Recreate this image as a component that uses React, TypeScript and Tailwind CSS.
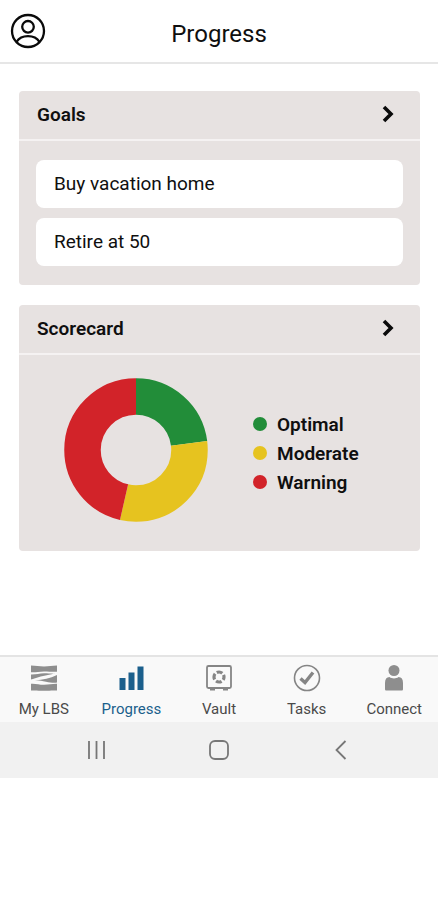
import type { ReactNode } from 'react';

interface ScoreSlice {
  label: string;
  value: number;
  stroke: string;
  dot: string;
}

const goals = ['Buy vacation home', 'Retire at 50'];

const scores: ScoreSlice[] = [
  { label: 'Optimal', value: 23, stroke: '#228d39', dot: 'bg-[#228d39]' },
  { label: 'Moderate', value: 30.6, stroke: '#e6c31f', dot: 'bg-[#e6c31f]' },
  { label: 'Warning', value: 46.4, stroke: '#d22329', dot: 'bg-[#d22329]' },
];

function ProfileIcon() {
  return (
    <svg width="36" height="36" viewBox="0 0 36 36" fill="none" stroke="#0a0a0a" strokeWidth="2.3" aria-hidden="true">
      <circle cx="18" cy="18" r="16" />
      <circle cx="18" cy="13.8" r="5.8" />
      <path d="M6.5 29C9 25 13 23.2 18 23.2s9 1.8 11.5 5.8" />
    </svg>
  );
}

function LogoIcon() {
  return (
    <svg width="28" height="28" viewBox="0 0 28 28" fill="#8e8e8e" aria-hidden="true">
      <path d="M1 1.5c5 0 8 1 13 1s8-1 13-1v6.3c-5 .3-8-.4-13-.4S6 8.5 1 8.3z" />
      <path d="M1 10.6c5 .2 8-1.300 13-1.300 4 0 8 .5 11 .3C19 11.200 12 11.900 6 14 3.500 14.800 2 15.300 1 15.500z" />
      <path d="M27 11v7.600c-4 .5-7-.2-11-.9-4-.7-7-1.300-11-1.200 8-.9 15-1.900 22-5.500z" />
      <path d="M1 19.700c5-.3 8 1 13 1s8-1 13-.9v6.700c-5-.3-8 .2-13 .2s-8-.5-13-.2z" />
    </svg>
  );
}

function BarsIcon() {
  return (
    <svg width="28" height="28" viewBox="0 0 28 28" fill="#1b5f8c" aria-hidden="true">
      <rect x="2.5" y="14" width="6" height="12" />
      <rect x="11.5" y="8.5" width="6" height="17.5" />
      <rect x="20.5" y="2.5" width="6" height="23.5" />
    </svg>
  );
}

function VaultIcon() {
  return (
    <svg width="28" height="28" viewBox="0 0 28 28" fill="none" stroke="#858585" aria-hidden="true">
      <rect x="2" y="2" width="24" height="22" rx="1.5" strokeWidth="1.8" />
      <path d="M5 25.5h5M18 25.5h5" strokeWidth="2" />
      <circle cx="14" cy="13" r="5" strokeWidth="3.2" strokeDasharray="5.854 2" strokeDashoffset="2.927" />
    </svg>
  );
}

function TasksIcon() {
  return (
    <svg width="28" height="28" viewBox="0 0 28 28" fill="none" stroke="#858585" aria-hidden="true">
      <circle cx="14" cy="14" r="12.5" strokeWidth="1.6" />
      <path d="M7.5 14.5l4.5 4L20 8.5" strokeWidth="3.4" />
    </svg>
  );
}

function PersonIcon() {
  return (
    <svg width="28" height="28" viewBox="0 0 28 28" fill="#8e8e8e" aria-hidden="true">
      <circle cx="14" cy="6.5" r="5.5" />
      <path d="M5 25v-6c0-4 1.5-6 4.5-6 1.3 1 2.7 1.4 4.5 1.4s3.2-.4 4.5-1.4c3 0 4.5 2 4.5 6v6c0 1-.5 1.5-1.5 1.5h-15C5.5 26.5 5 26 5 25z" />
    </svg>
  );
}

const tabs = [
  { label: 'My LBS', icon: <LogoIcon />, active: false },
  { label: 'Progress', icon: <BarsIcon />, active: true },
  { label: 'Vault', icon: <VaultIcon />, active: false },
  { label: 'Tasks', icon: <TasksIcon />, active: false },
  { label: 'Connect', icon: <PersonIcon />, active: false },
];

function Card({ title, children }: { title: string; children: ReactNode }) {
  return (
    <section className="rounded-[4px] bg-[#e7e2e1]">
      <button
        type="button"
        className="flex h-[50px] w-full items-center justify-between border-b-2 border-[#f5f2f2] pr-6 pl-[18px] text-left"
      >
        <h2 className="text-[19px] font-semibold">{title}</h2>
        <svg width="16" height="20" viewBox="0 0 16 20" fill="none" stroke="#0a0a0a" strokeWidth="3.6" aria-hidden="true">
          <path d="M4 2L11 9L4 16" />
        </svg>
      </button>
      {children}
    </section>
  );
}

function ScoreChart() {
  return (
    <svg width="144" height="144" viewBox="0 0 144 144" fill="none" role="img" aria-label="Scorecard">
      {scores.map((slice, i) => {
        const start = scores.slice(0, i).reduce((sum, s) => sum + s.value, 0);
        return (
          <circle
            key={slice.label}
            cx="72"
            cy="72"
            r="53.5"
            stroke={slice.stroke}
            strokeWidth="36.5"
            pathLength="100"
            strokeDasharray={`${slice.value} ${100 - slice.value}`}
            strokeDashoffset={-start}
            transform="rotate(-90 72 72)"
          />
        );
      })}
    </svg>
  );
}

export default function App() {
  return (
    <div className="min-h-screen bg-white font-['Roboto',sans-serif] text-[#0f0f0f]">
      <header className="grid h-16 grid-cols-[48px_1fr_48px] items-center border-b-2 border-[#e6e6e6]">
        <button type="button" aria-label="Profile" className="pl-[10px]">
          <ProfileIcon />
        </button>
        <h1 className="pt-[6px] text-center text-2xl">Progress</h1>
      </header>

      <main className="flex flex-col gap-5 pt-[27px] pr-[18px] pb-[104px] pl-[19px]">
        <Card title="Goals">
          <ul className="flex flex-col gap-[10px] px-[17px] py-[19px]">
            {goals.map((goal) => (
              <li key={goal} className="flex h-12 items-center rounded-lg bg-white px-[18px] text-[19px]">
                {goal}
              </li>
            ))}
          </ul>
        </Card>

        <Card title="Scorecard">
          <div className="flex items-center gap-[45px] pt-[23px] pb-[29px] pl-[45px]">
            <ScoreChart />
            <ul className="flex flex-col gap-1 pt-[6px]">
              {scores.map((slice) => (
                <li key={slice.label} className="flex items-center gap-[10px] text-[19px] leading-[25px] font-semibold">
                  <span className={`size-[14px] rounded-full ${slice.dot}`} />
                  {slice.label}
                </li>
              ))}
            </ul>
          </div>
        </Card>
      </main>

      <nav className="grid h-[67px] grid-cols-5 border-t-2 border-[#e4e4e4] bg-[#f9f9f9]">
        {tabs.map((tab) => (
          <a
            key={tab.label}
            href="#"
            aria-current={tab.active ? 'page' : undefined}
            className={`flex flex-col items-center gap-[7px] pt-[7px] text-[15px] leading-5 ${tab.active ? 'text-[#1b5f8c]' : 'text-[#4a4a4a]'}`}
          >
            {tab.icon}
            {tab.label}
          </a>
        ))}
      </nav>

      <div className="grid h-14 grid-cols-3 items-center justify-items-center bg-[#f1f1f1] px-9">
        <button type="button" aria-label="Recent apps">
          <svg width="20" height="20" viewBox="0 0 20 20" stroke="#777" strokeWidth="1.8" aria-hidden="true">
            <path d="M2 1v18M9.5 1v18M17 1v18" />
          </svg>
        </button>
        <button type="button" aria-label="Home">
          <svg width="20" height="20" viewBox="0 0 20 20" fill="none" stroke="#777" strokeWidth="1.8" aria-hidden="true">
            <rect x="1" y="1" width="18" height="18" rx="5" />
          </svg>
        </button>
        <button type="button" aria-label="Back">
          <svg width="20" height="20" viewBox="0 0 20 20" fill="none" stroke="#777" strokeWidth="1.8" aria-hidden="true">
            <path d="M14.5 1L5.5 10l9 9" />
          </svg>
        </button>
      </div>
    </div>
  );
}
